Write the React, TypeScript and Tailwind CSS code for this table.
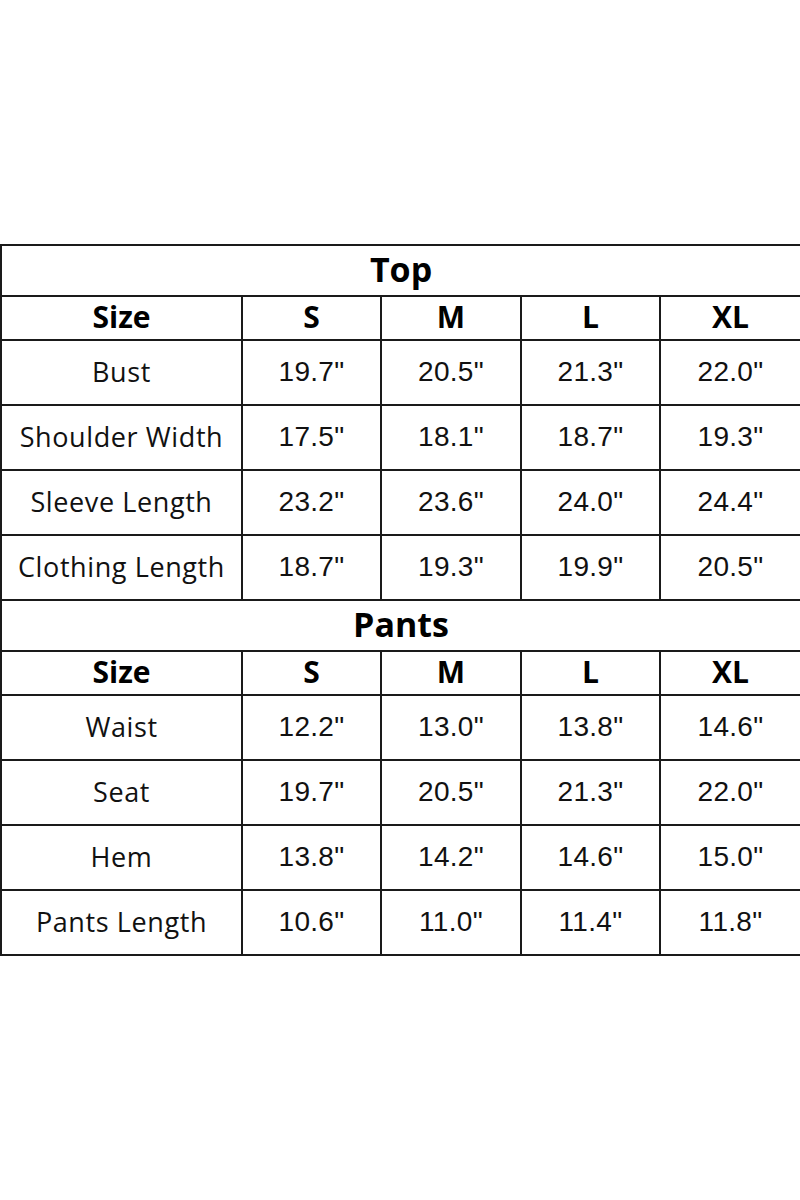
import React from "react";

const top = [
  ["Bust", "19.7\"", "20.5\"", "21.3\"", "22.0\""],
  ["Shoulder Width", "17.5\"", "18.1\"", "18.7\"", "19.3\""],
  ["Sleeve Length", "23.2\"", "23.6\"", "24.0\"", "24.4\""],
  ["Clothing Length", "18.7\"", "19.3\"", "19.9\"", "20.5\""],
];
const pants = [
  ["Waist", "12.2\"", "13.0\"", "13.8\"", "14.6\""],
  ["Seat", "19.7\"", "20.5\"", "21.3\"", "22.0\""],
  ["Hem", "13.8\"", "14.2\"", "14.6\"", "15.0\""],
  ["Pants Length", "10.6\"", "11.0\"", "11.4\"", "11.8\""],
];

const cell = "border-2 border-[#1a1a1a] text-center align-middle px-0 pt-0";

function Section({ title, rows, titleH }: { title: string; rows: string[][]; titleH: string }) {
  return (
    <>
      <tr className={titleH}>
        <td colSpan={5} className={`${cell} pb-[4px] font-bold text-[34px] leading-none [font-family:'Open_Sans',sans-serif] text-black`}>
          {title}
        </td>
      </tr>
      <tr className="h-[44px]">
        {["Size", "S", "M", "L", "XL"].map((h) => (
          <td key={h} className={`${cell} pb-[2px] font-bold text-[30px] leading-none [font-family:'Open_Sans',sans-serif] text-black`}>
            {h}
          </td>
        ))}
      </tr>
      {rows.map((r) => (
        <tr key={r[0]} className="h-[65px]">
          <td className={`${cell} pb-[2px] text-[27px] tracking-[0.6px] leading-none [font-family:'Open_Sans',sans-serif] text-[#111]`}>{r[0]}</td>
          {r.slice(1).map((v, i) => (
            <td key={i} className={`${cell} pb-[1px] text-[28px] tracking-[0.3px] leading-none [font-family:'Liberation_Sans',Arial,sans-serif] text-[#111]`}>
              {v}
            </td>
          ))}
        </tr>
      ))}
    </>
  );
}

export default function App() {
  return (
    <div className="w-[800px] h-[1200px] bg-white pt-[244px]">
      <table className="w-[800px] border-collapse table-fixed">
        <colgroup>
          <col className="w-[241px]" />
          <col className="w-[139px]" />
          <col className="w-[140px]" />
          <col className="w-[139px]" />
          <col className="w-[141px]" />
        </colgroup>
        <tbody>
          <Section title="Top" rows={top} titleH="h-[51px]" />
          <Section title="Pants" rows={pants} titleH="h-[51px]" />
        </tbody>
      </table>
    </div>
  );
}
